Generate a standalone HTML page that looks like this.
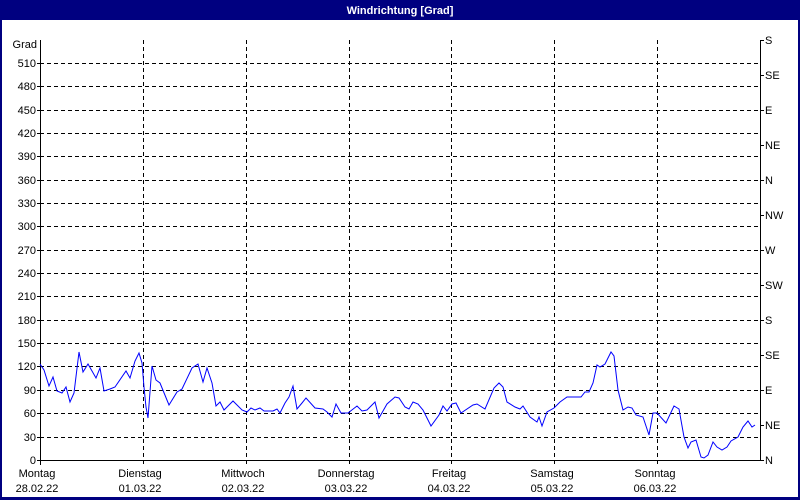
<!DOCTYPE html>
<html><head><meta charset="utf-8"><style>
html,body{margin:0;padding:0;background:#fff}
svg{display:block}
text{font-family:"Liberation Sans",sans-serif;font-size:11px;fill:#000}
</style></head><body>
<svg width="800" height="500" viewBox="0 0 800 500" xmlns="http://www.w3.org/2000/svg">
<rect x="0" y="0" width="800" height="500" fill="#000080"/>
<rect x="2" y="20" width="796" height="477" fill="#fff"/>
<text x="400" y="14" text-anchor="middle" style="font-weight:bold;fill:#fff;font-size:11px">Windrichtung [Grad]</text>
<g stroke="#000" stroke-width="1" stroke-dasharray="4,3" shape-rendering="crispEdges">
<line x1="40" x2="760" y1="63.5" y2="63.5"/><line x1="40" x2="760" y1="86.5" y2="86.5"/>
<line x1="40" x2="760" y1="110.5" y2="110.5"/><line x1="40" x2="760" y1="133.5" y2="133.5"/>
<line x1="40" x2="760" y1="156.5" y2="156.5"/><line x1="40" x2="760" y1="180.5" y2="180.5"/>
<line x1="40" x2="760" y1="203.5" y2="203.5"/><line x1="40" x2="760" y1="226.5" y2="226.5"/>
<line x1="40" x2="760" y1="250.5" y2="250.5"/><line x1="40" x2="760" y1="273.5" y2="273.5"/>
<line x1="40" x2="760" y1="296.5" y2="296.5"/><line x1="40" x2="760" y1="320.5" y2="320.5"/>
<line x1="40" x2="760" y1="343.5" y2="343.5"/><line x1="40" x2="760" y1="366.5" y2="366.5"/>
<line x1="40" x2="760" y1="390.5" y2="390.5"/><line x1="40" x2="760" y1="413.5" y2="413.5"/>
<line x1="40" x2="760" y1="437.5" y2="437.5"/>
<line x1="143.5" x2="143.5" y1="40" y2="465"/><line x1="246.5" x2="246.5" y1="40" y2="465"/>
<line x1="349.5" x2="349.5" y1="40" y2="465"/><line x1="451.5" x2="451.5" y1="40" y2="465"/>
<line x1="554.5" x2="554.5" y1="40" y2="465"/><line x1="657.5" x2="657.5" y1="40" y2="465"/>
</g>
<g stroke="#000" stroke-width="1" shape-rendering="crispEdges">
<line x1="40.5" x2="40.5" y1="40" y2="465"/>
<line x1="760.5" x2="760.5" y1="40" y2="461"/>
<line x1="40" x2="761" y1="460.5" y2="460.5"/>
<line x1="37" x2="40" y1="63.5" y2="63.5"/><line x1="37" x2="40" y1="86.5" y2="86.5"/><line x1="37" x2="40" y1="110.5" y2="110.5"/><line x1="37" x2="40" y1="133.5" y2="133.5"/><line x1="37" x2="40" y1="156.5" y2="156.5"/><line x1="37" x2="40" y1="180.5" y2="180.5"/><line x1="37" x2="40" y1="203.5" y2="203.5"/><line x1="37" x2="40" y1="226.5" y2="226.5"/><line x1="37" x2="40" y1="250.5" y2="250.5"/><line x1="37" x2="40" y1="273.5" y2="273.5"/><line x1="37" x2="40" y1="296.5" y2="296.5"/><line x1="37" x2="40" y1="320.5" y2="320.5"/><line x1="37" x2="40" y1="343.5" y2="343.5"/><line x1="37" x2="40" y1="366.5" y2="366.5"/><line x1="37" x2="40" y1="390.5" y2="390.5"/><line x1="37" x2="40" y1="413.5" y2="413.5"/><line x1="37" x2="40" y1="437.5" y2="437.5"/><line x1="37" x2="40" y1="460.5" y2="460.5"/>
<line x1="760" x2="764" y1="40.5" y2="40.5"/><line x1="760" x2="764" y1="75.5" y2="75.5"/><line x1="760" x2="764" y1="110.5" y2="110.5"/><line x1="760" x2="764" y1="145.5" y2="145.5"/><line x1="760" x2="764" y1="180.5" y2="180.5"/><line x1="760" x2="764" y1="215.5" y2="215.5"/><line x1="760" x2="764" y1="250.5" y2="250.5"/><line x1="760" x2="764" y1="285.5" y2="285.5"/><line x1="760" x2="764" y1="320.5" y2="320.5"/><line x1="760" x2="764" y1="355.5" y2="355.5"/><line x1="760" x2="764" y1="390.5" y2="390.5"/><line x1="760" x2="764" y1="425.5" y2="425.5"/><line x1="760" x2="764" y1="460.5" y2="460.5"/>
</g>
<g text-anchor="end">
<text x="37" y="48">Grad</text>
<text x="36" y="67">510</text><text x="36" y="90">480</text><text x="36" y="114">450</text><text x="36" y="137">420</text><text x="36" y="160">390</text><text x="36" y="184">360</text><text x="36" y="207">330</text><text x="36" y="230">300</text><text x="36" y="254">270</text><text x="36" y="277">240</text><text x="36" y="300">210</text><text x="36" y="324">180</text><text x="36" y="347">150</text><text x="36" y="370">120</text><text x="36" y="394">90</text><text x="36" y="417">60</text><text x="36" y="441">30</text><text x="36" y="464">0</text>
</g>
<g>
<text x="765" y="44">S</text><text x="765" y="79">SE</text><text x="765" y="114">E</text><text x="765" y="149">NE</text><text x="765" y="184">N</text><text x="765" y="219">NW</text><text x="765" y="254">W</text><text x="765" y="289">SW</text><text x="765" y="324">S</text><text x="765" y="359">SE</text><text x="765" y="394">E</text><text x="765" y="429">NE</text><text x="765" y="464">N</text>
</g>
<g text-anchor="middle">
<text x="37" y="477">Montag</text><text x="37" y="492">28.02.22</text>
<text x="140" y="477">Dienstag</text><text x="140" y="492">01.03.22</text>
<text x="243" y="477">Mittwoch</text><text x="243" y="492">02.03.22</text>
<text x="346" y="477">Donnerstag</text><text x="346" y="492">03.03.22</text>
<text x="449" y="477">Freitag</text><text x="449" y="492">04.03.22</text>
<text x="552" y="477">Samstag</text><text x="552" y="492">05.03.22</text>
<text x="655" y="477">Sonntag</text><text x="655" y="492">06.03.22</text>
</g>
<polyline fill="none" stroke="#0000ff" stroke-width="1" points="40,364 44,370 49,386 53,377 57,391 62,393 66,387 70,402 74,393 79,352 83,372 88,364 96,378 100,368 104,391 110,389 115,387 126,371 130,378 135,361 139,353 142,363 144,387 146,407 148,418 152,366 156,380 160,383 169,405 177,392 182,389 192,368 198,364 203,382 207,368 212,383 216,406 220,402 224,410 233,401 242,410 247,412 251,408 255,410 260,408 264,411 273,411 277,409 280,413 285,403 289,397 293,386 297,409 302,403 306,398 315,408 323,409 327,412 332,417 336,404 341,413 348,413 357,406 362,411 367,410 375,402 379,418 387,404 395,397 399,398 405,407 409,409 413,402 418,404 423,410 431,426 439,415 443,406 447,411 452,404 456,403 461,413 473,405 477,404 485,409 494,388 499,383 503,387 507,402 515,407 520,409 523,406 530,417 537,422 539,417 542,426 547,412 554,408 560,402 567,397 581,397 585,392 589,392 593,383 597,365 600,367 605,364 611,352 614,356 618,390 623,410 628,407 632,408 636,415 643,417 649,435 653,413 657,413 666,423 674,406 679,409 684,437 688,448 691,442 696,440 701,457 704,458 708,455 713,442 717,447 722,450 727,447 731,441 738,437 743,427 748,421 752,427 755,425"/>
</svg>
</body></html>
